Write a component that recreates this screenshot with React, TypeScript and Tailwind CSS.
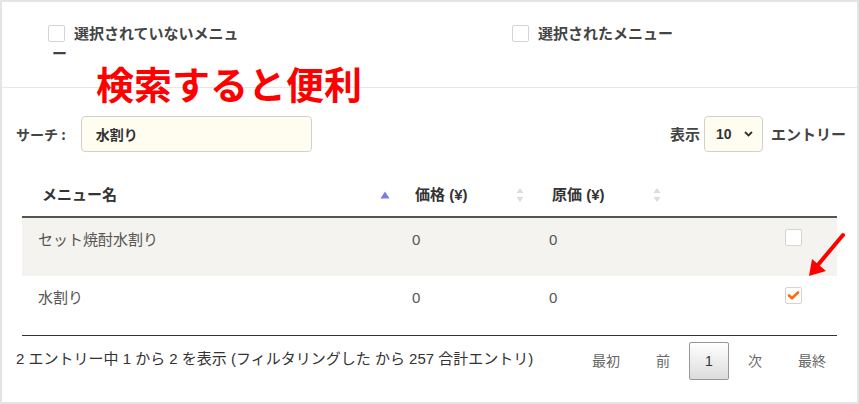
import React from "react";

function Box({ checked = false, className = "" }: { checked?: boolean; className?: string }) {
  return (
    <span
      className={
        "inline-flex items-center justify-center w-[17px] h-[17px] border border-[#d4d4d4] bg-white rounded-[2px] " +
        className
      }
    >
      {checked && (
        <svg width="13" height="11" viewBox="0 0 13 11">
          <path d="M2 5.5 L5 8.3 L11 2.5" fill="none" stroke="#ff6a13" strokeWidth="2.6" strokeLinecap="round" strokeLinejoin="round" />
        </svg>
      )}
    </span>
  );
}

function SortBoth() {
  return (
    <svg width="8" height="16" viewBox="0 0 8 16">
      <path d="M4 1 L7.5 6 L0.5 6 Z" fill="#dcdcdc" />
      <path d="M4 15 L7.5 10 L0.5 10 Z" fill="#dcdcdc" />
    </svg>
  );
}

function SortAsc() {
  return (
    <svg width="10" height="8" viewBox="0 0 10 8">
      <path d="M5 0.5 L9.5 7.5 L0.5 7.5 Z" fill="#7b7be0" />
    </svg>
  );
}

export default function App() {
  return (
    <div className="relative w-[859px] h-[404px] overflow-hidden bg-white border-2 border-[#e4e4e4] text-[#333] font-['Liberation_Sans','Noto_Sans_CJK_JP',sans-serif]">
      {/* top section */}
      <div className="h-[86px] border-b border-[#e6e6e6] flex pl-[46px] pt-[21px] font-['Noto_Sans_CJK_JP',sans-serif]">
        <div className="w-[464px]">
          <div className="text-[15px] font-bold leading-[20px] text-[#444]">
            <Box className="align-[-3px] mr-[9px]" />
            選択されていないメニュ
            <br />
            <span className="pl-[4px]">ー</span>
          </div>
        </div>
        <div className="text-[15px] font-bold leading-[20px] text-[#444]">
          <Box className="align-[-3px] mr-[9px]" />
          選択されたメニュー
        </div>
      </div>

      {/* search row */}
      <div className="mt-[28px] flex items-center justify-between pl-[14px] pr-[11px] font-['Noto_Sans_CJK_JP',sans-serif]">
        <div className="flex items-center">
          <span className="text-[14px] font-bold text-[#444]">サーチ :</span>
          <div className="ml-[15px] w-[231px] h-[36px] rounded-[4px] border border-[#d0d0d0] bg-[#fffdf0] flex items-center pl-[14px] text-[14px] font-bold text-[#333]">
            水割り
          </div>
        </div>
        <div className="flex items-center text-[15px] font-bold text-[#444]">
          <span>表示</span>
          <div className="ml-[4px] mr-[8px] w-[59px] h-[36px] rounded-[4px] border border-[#d0d0d0] bg-[#fffdf0] flex items-center justify-between pl-[11px] pr-[9px] text-[14px] font-bold text-[#333] font-['Liberation_Sans',sans-serif]">
            <span>10</span>
            <svg width="9" height="6" viewBox="0 0 9 6">
              <path d="M1 1 L4.5 4.5 L8 1" fill="none" stroke="#333" strokeWidth="1.8" />
            </svg>
          </div>
          <span>エントリー</span>
        </div>
      </div>

      {/* table */}
      <div className="mx-[20px] mt-[22px] font-['Liberation_Sans','Noto_Sans_CJK_JP',sans-serif]">
        <div className="grid grid-cols-[378px_137px_136px_1fr] h-[44px] border-b-2 border-[#555] text-[15px] font-bold text-[#333]">
          <div className="flex items-center justify-between pl-[20px] pr-[10px]">
            <span>メニュー名</span>
            <SortAsc />
          </div>
          <div className="flex items-center justify-between pl-[15px] pr-[13px]">
            <span>価格 (¥)</span>
            <SortBoth />
          </div>
          <div className="flex items-center justify-between pl-[15px] pr-[12px]">
            <span>原価 (¥)</span>
            <SortBoth />
          </div>
          <div />
        </div>

        <div className="grid grid-cols-[378px_137px_136px_1fr] h-[58px] bg-[#f4f3ef] text-[15px] text-[#555] leading-[20px]">
          <div className="pl-[16px] pt-[12px]">セット焼酎水割り</div>
          <div className="pl-[12px] pt-[12px]">0</div>
          <div className="pl-[12px] pt-[12px]">0</div>
          <div className="flex justify-end pr-[35px] pt-[11px]">
            <Box />
          </div>
        </div>
        <div className="grid grid-cols-[378px_137px_136px_1fr] h-[60px] bg-white text-[15px] text-[#555] leading-[20px] border-b border-[#333]">
          <div className="pl-[16px] pt-[12px]">水割り</div>
          <div className="pl-[12px] pt-[12px]">0</div>
          <div className="pl-[12px] pt-[12px]">0</div>
          <div className="flex justify-end pr-[35px] pt-[11px]">
            <Box checked />
          </div>
        </div>
      </div>

      {/* footer */}
      <div className="flex items-start justify-between pl-[14px] pr-[14px]">
        <div className="pt-[13px] text-[15px] leading-[20px] text-[#333]">
          2 エントリー中 1 から 2 を表示 (フィルタリングした から 257 合計エントリ)
        </div>
        <div className="mt-[6px] flex items-center gap-[2px] text-[14px] text-[#666]">
          <span className="px-[17px] h-[38px] flex items-center">最初</span>
          <span className="px-[17px] h-[38px] flex items-center">前</span>
          <span className="w-[40px] h-[38px] flex items-center justify-center border border-[#979797] rounded-[2px] bg-gradient-to-b from-white to-[#dcdcdc] text-[#333]">
            1
          </span>
          <span className="px-[17px] h-[38px] flex items-center">次</span>
          <span className="px-[17px] h-[38px] flex items-center">最終</span>
        </div>
      </div>

      {/* annotation text */}
      <div className="absolute left-[94px] top-[62px] text-[38px] leading-none font-bold text-[#ff0000] font-['Noto_Sans_CJK_JP',sans-serif]">
        検索すると便利
      </div>

      {/* annotation arrow */}
      <svg className="absolute left-0 top-0 pointer-events-none" width="859" height="404" viewBox="0 0 859 404">
        <line x1="841" y1="233" x2="815" y2="264" stroke="#ff0000" strokeWidth="4" strokeLinecap="round" />
        <path d="M807 274 L810 257 L824 269 Z" fill="#ff0000" />
      </svg>
    </div>
  );
}
